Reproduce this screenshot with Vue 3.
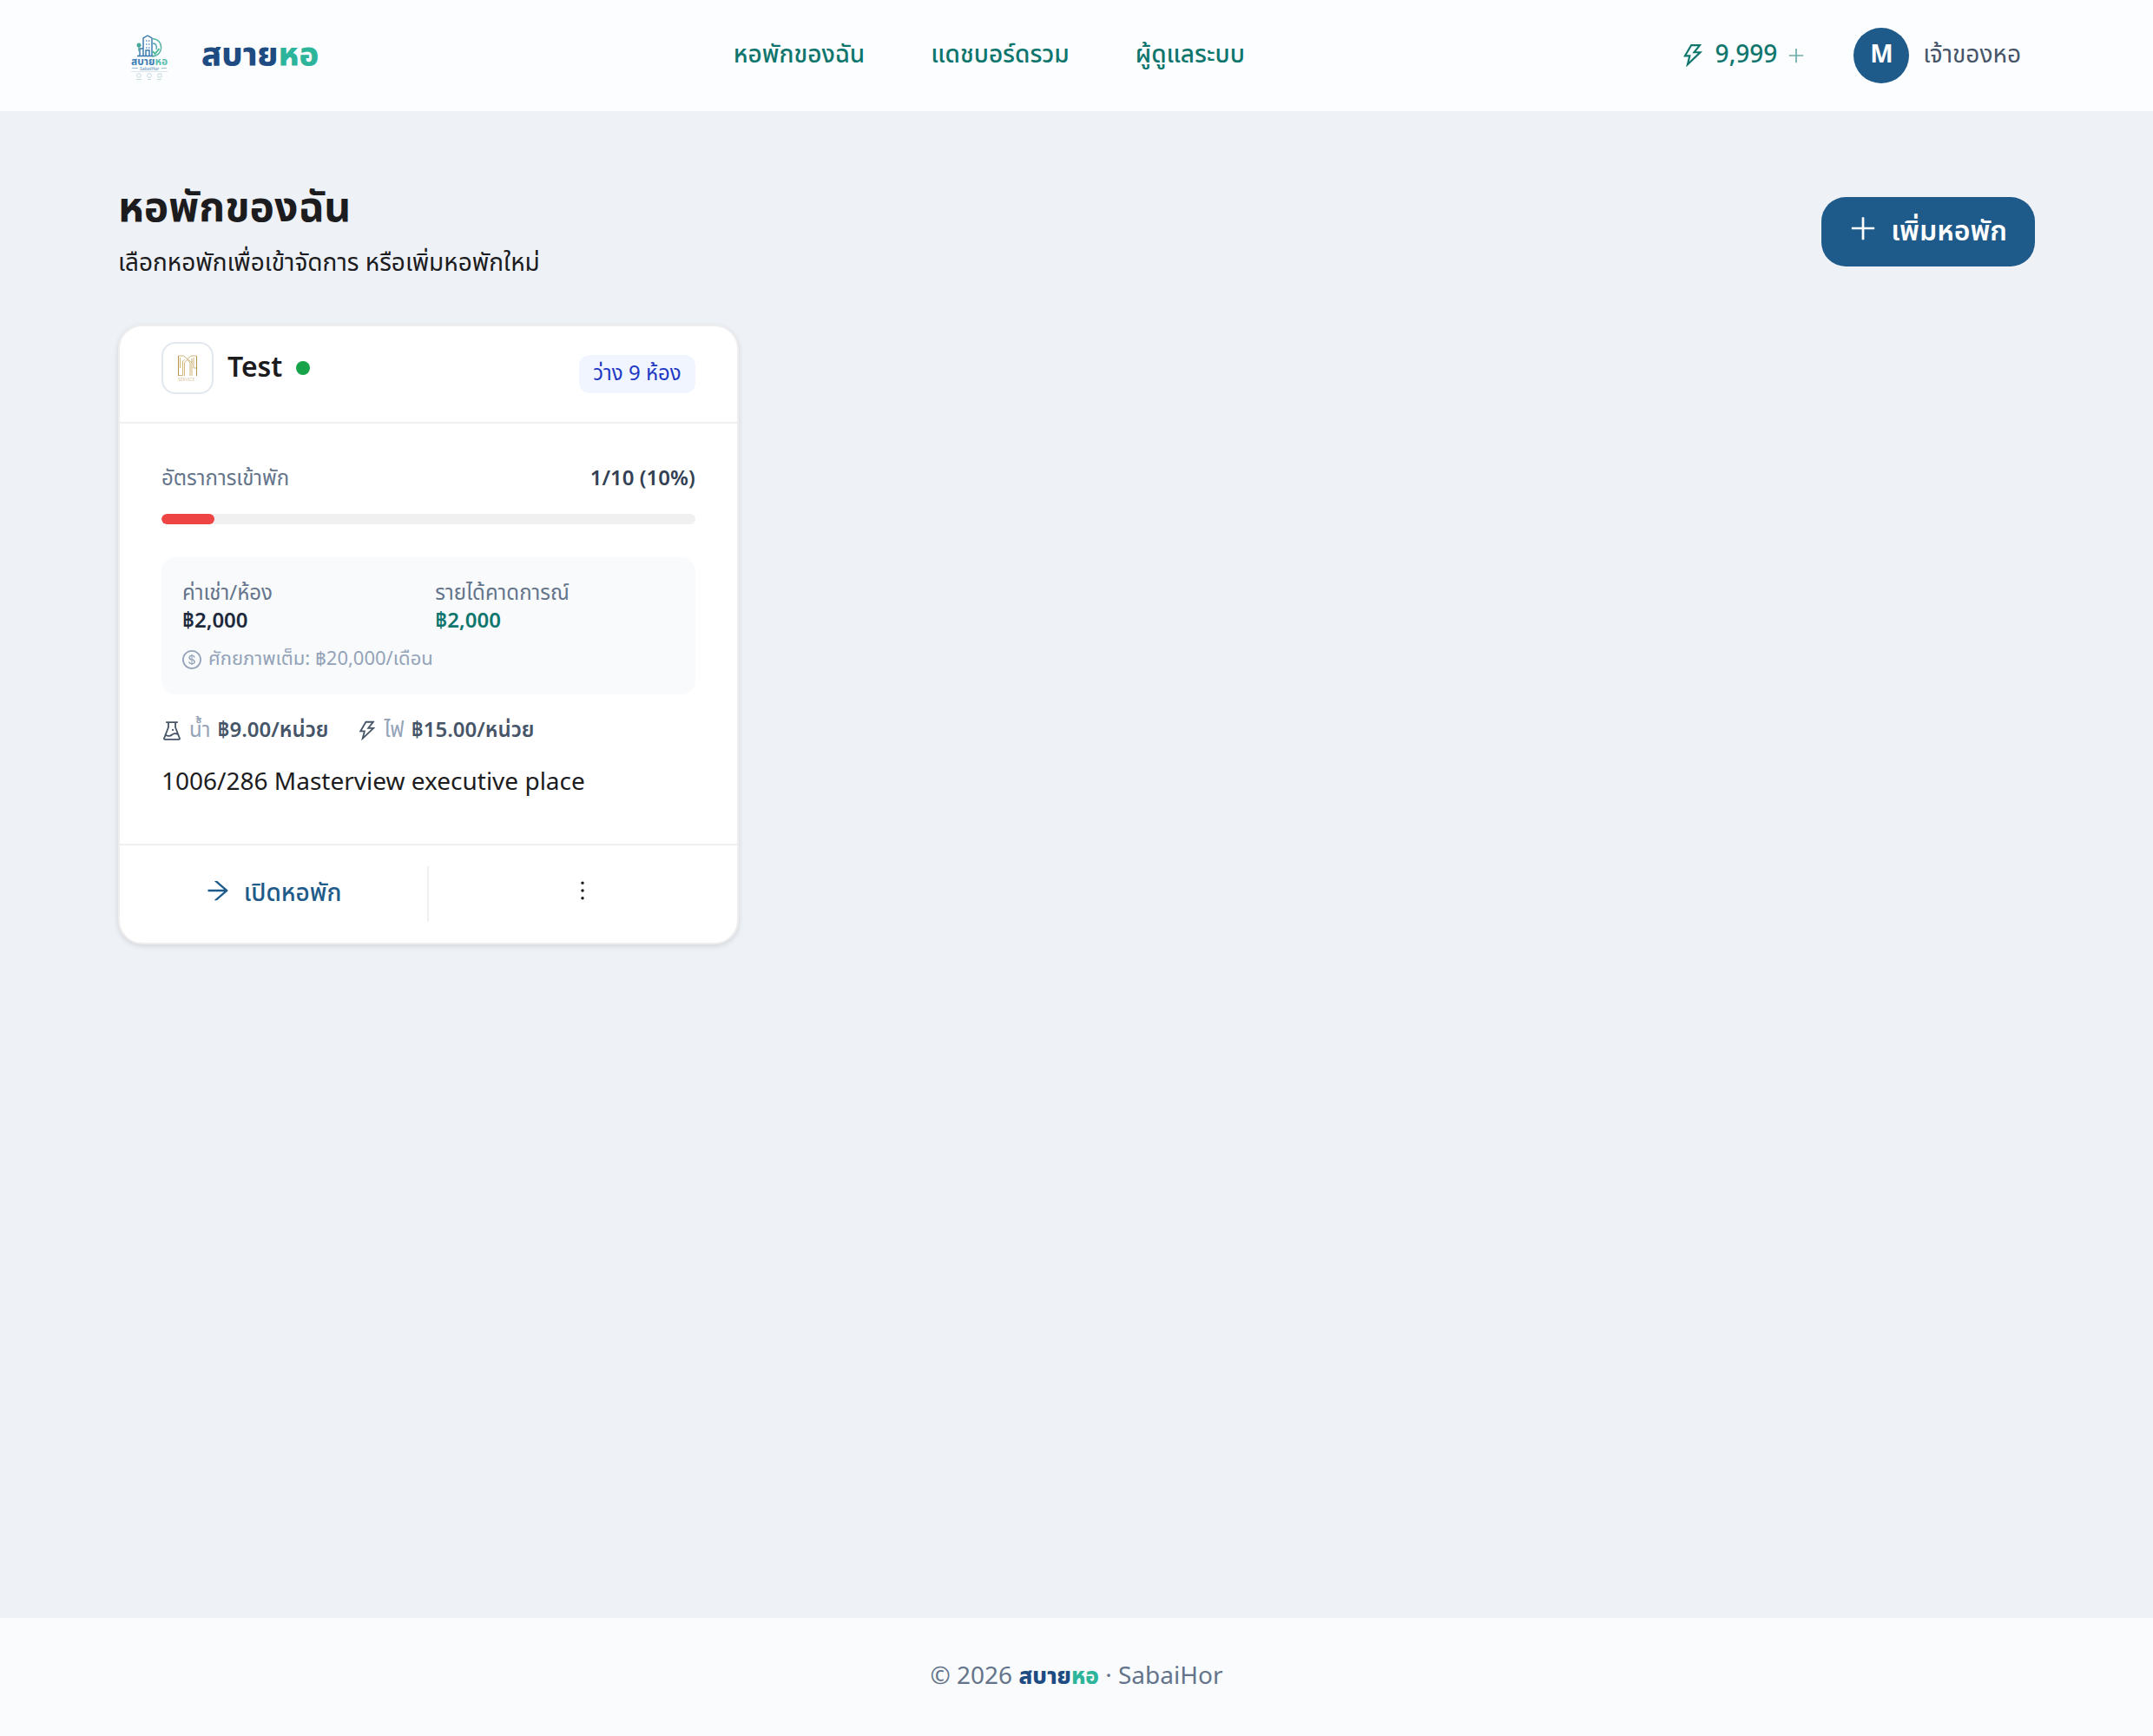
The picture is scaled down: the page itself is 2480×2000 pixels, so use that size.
<script setup>
const icons = {
  bolt: 'M848 359.3H627.7L825.8 109c4.1-5.3.4-13-6.3-13H436c-2.8 0-5.5 1.5-6.9 4L170 547.5c-3.1 5.3.7 12 6.9 12h174.4l-89.4 357.6c-1.9 7.8 7.5 13.3 13.3 7.7L853.5 373c5.2-4.9 1.7-13.7-5.5-13.7zM378.2 732.5l60.3-241H281.1l189.6-327.4h224.6L487 427.4h211L378.2 732.5z',
  flask: 'M512 472a40 40 0 1080 0 40 40 0 10-80 0zm367 352.9L696.3 352V178H768v-68H256v68h71.7v174L145 824.9c-2.8 7.4-4.3 15.2-4.3 23.1 0 35.3 28.7 64 64 64h614.6c7.9 0 15.7-1.5 23.1-4.3 33-12.7 49.4-49.8 36.6-82.8zM395.7 364.7V180h232.6v184.7L719.2 600c-20.7-5.3-42.1-8-63.9-8-61.2 0-119.2 21.5-165.3 60a188.78 188.78 0 01-121.3 43.9c-32.7 0-64.1-8.3-91.8-23.7l118.8-307.5zM210.5 844l41.7-107.8c35.7 18.1 75.4 27.8 116.6 27.8 61.2 0 119.2-21.5 165.3-60 33.9-28.2 76.3-43.9 121.3-43.9 35 0 68.4 9.5 97.6 27.1L813.5 844h-603z',
  arrow: 'M869 487.8L491.2 159.9c-2.9-2.5-6.6-3.9-10.5-3.9h-88.5c-7.4 0-10.8 9.2-5.2 14l350.2 304H152c-4.4 0-8 3.6-8 8v60c0 4.4 3.6 8 8 8h585.1L386.9 854c-5.6 4.9-2.2 14 5.2 14h91.5c1.9 0 3.8-.7 5.2-2L869 536.2a32.07 32.07 0 000-48.4z',
  more: 'M456 231a56 56 0 10112 0 56 56 0 10-112 0zm0 280a56 56 0 10112 0 56 56 0 10-112 0zm0 280a56 56 0 10112 0 56 56 0 10-112 0z',
  plus: 'M482 152h60q8 0 8 8v314h322q8 0 8 8v60q0 8-8 8H550v322q0 8-8 8h-60q-8 0-8-8V550H152q-8 0-8-8v-60q0-8 8-8h322V160q0-8 8-8z',
  dollar: 'M512 64C264.6 64 64 264.6 64 512s200.6 448 448 448 448-200.6 448-448S759.4 64 512 64zm0 820c-205.4 0-372-166.6-372-372s166.6-372 372-372 372 166.6 372 372-166.6 372-372 372zm47.7-395.2l-25.4-5.9V348.6c38 5.2 61.5 29 65.5 58.2.5 4 3.9 6.9 7.9 6.9h44.9c4.7 0 8.4-4.1 8-8.8-6.1-62.3-57.4-102.3-125.9-109.2V263c0-4.4-3.6-8-8-8h-28.1c-4.4 0-8 3.6-8 8v33c-70.8 6.9-126.2 46-126.2 119 0 67.6 49.8 100.2 102.1 112.7l24.7 6.3v142.7c-44.2-5.9-69-29.5-74.1-61.3-.6-3.8-4-6.6-7.9-6.6H363c-4.7 0-8.4 4-8 8.7 4.5 55 46.2 105.6 135.2 112.1V761c0 4.4 3.6 8 8 8h28.4c4.4 0 8-3.6 8-8.1l-.2-31.7c78.3-6.9 134.3-48.8 134.3-124-.1-69.4-44.2-100.4-109-116.4zm-68.6-16.2c-5.6-1.6-10.3-3.1-15-5-33.8-12.2-49.5-31.9-49.5-57.3 0-36.3 27.5-57 64.5-61.7v124zM534.3 677V543.3c3.1.9 5.9 1.6 8.8 2.2 47.3 14.4 63.2 34.4 63.2 65.1 0 39.1-29.4 62.6-72 66.4z',
}

const links = ['หอพักของฉัน', 'แดชบอร์ดรวม', 'ผู้ดูแลระบบ']
const occupied = 1
const rooms = 10
const percent = (occupied / rooms) * 100
</script>

<template>
  <div class="page">
    <header class="topbar">
      <a class="brand" href="#">
        <svg class="brand-logo" viewBox="0 0 80 80" aria-hidden="true">
          <g fill="none" stroke-width="1.4">
            <path d="M29 40V20l5-3 5 3v20M25 40v-8h4M32 40v-6h4v6M22 40.5h19" stroke="#3476ad" />
            <path d="M40 20.5c13 1 13 20-1 20.5" stroke="#55b3a4" />
            <path d="M40 26c4 0 5 3 4 7" stroke="#4b9fb0" />
            <path d="M40 35l2.5 3 5-6" stroke="#45b98f" stroke-width="1.8" />
            <path d="M32 23h1.5m1.5 0h1.5m-4.5 4h1.5m1.5 0h1.5m-4.5 4h1.5m1.5 0h1.5" stroke="#5b93c8" />
            <path d="M24 30v5" stroke="#45a99a" />
          </g>
          <circle cx="24" cy="28" r="2.5" fill="#45a99a" />
          <text x="15" y="51" class="logo-name" fill="#3c7db4">สบาย<tspan fill="#5cc0b0">หอ</tspan></text>
          <path d="M16 54.5h7M50 54.5h6" stroke="#8badc8" stroke-width=".8" />
          <text x="25" y="57" class="logo-sub" fill="#7ba3c4">SabaiHor</text>
          <path d="M15 58.5h42" stroke="#d5dfe6" stroke-width=".8" />
          <g fill="none" stroke="#c3d5dd" stroke-width=".9">
            <circle cx="24" cy="63" r="2.4" /><circle cx="36" cy="63" r="2.4" />
            <path d="M46 61h4v4h-4zM21 67.5h6M34 67.5h4M45 67.5h5" />
          </g>
        </svg>
        <span class="brand-name">สบาย<span class="mint">หอ</span></span>
      </a>
      <nav class="nav">
        <a v-for="link in links" :key="link" href="#">{{ link }}</a>
      </nav>
      <div class="account">
        <button class="credits" type="button">
          <svg class="i28" viewBox="64 64 896 896"><path :d="icons.bolt" /></svg>
          <span>9,999</span>
          <svg class="i20 faded" viewBox="64 64 896 896"><path :d="icons.plus" /></svg>
        </button>
        <button class="user" type="button">
          <span class="avatar">M</span>
          <span>เจ้าของหอ</span>
        </button>
      </div>
    </header>

    <main class="content">
      <div class="heading">
        <div>
          <h1>หอพักของฉัน</h1>
          <p>เลือกหอพักเพื่อเข้าจัดการ หรือเพิ่มหอพักใหม่</p>
        </div>
        <button class="add" type="button">
          <svg class="i32" viewBox="64 64 896 896"><path :d="icons.plus" /></svg>
          <span>เพิ่มหอพัก</span>
        </button>
      </div>

      <div class="grid">
        <article class="card">
          <div class="card-head">
            <div class="card-title">
              <svg class="dorm-logo" viewBox="0 0 56 56" aria-hidden="true">
                <g fill="none" stroke="#cfb57a" stroke-width="1">
                  <path d="M17.5 14h6l10 8M19.5 16v12M17.5 36.5h5V20l2-1.5M24.5 37V22l3.5-4M31 37V22l-3-3.5M28 17.5l4-3.5h6M35 16v12h3M33 37V17" />
                  <path d="M38.5 14v23M17.5 14v23" stroke="#b9954a" />
                </g>
                <text x="17" y="43" class="dorm-sub">SERVICE</text>
              </svg>
              <h2>Test</h2>
              <span class="dot"></span>
            </div>
            <span class="tag">ว่าง 9 ห้อง</span>
          </div>

          <div class="card-body">
            <div class="rate">
              <span>อัตราการเข้าพัก</span>
              <strong>{{ occupied }}/{{ rooms }} ({{ percent }}%)</strong>
            </div>
            <div class="bar"><div class="fill" :style="{ width: percent + '%' }"></div></div>
            <div class="panel">
              <div class="figures">
                <div><span>ค่าเช่า/ห้อง</span><strong>฿2,000</strong></div>
                <div><span>รายได้คาดการณ์</span><strong class="green">฿2,000</strong></div>
              </div>
              <div class="potential">
                <svg class="i22" viewBox="64 64 896 896"><path :d="icons.dollar" /></svg>
                <span>ศักยภาพเต็ม: ฿20,000/เดือน</span>
              </div>
            </div>
            <div class="utilities">
              <div>
                <svg class="i24" viewBox="64 64 896 896"><path :d="icons.flask" /></svg>
                <span>น้ำ</span><strong>฿9.00/หน่วย</strong>
              </div>
              <div>
                <svg class="i24" viewBox="64 64 896 896"><path :d="icons.bolt" /></svg>
                <span>ไฟ</span><strong>฿15.00/หน่วย</strong>
              </div>
            </div>
            <p class="address">1006/286 Masterview executive place</p>
          </div>

          <div class="card-foot">
            <button class="open" type="button">
              <svg class="i28" viewBox="64 64 896 896"><path :d="icons.arrow" /></svg>
              <span>เปิดหอพัก</span>
            </button>
            <button class="more" type="button" aria-label="เพิ่มเติม">
              <svg class="i28" viewBox="64 64 896 896"><path :d="icons.more" /></svg>
            </button>
          </div>
        </article>
      </div>
    </main>

    <footer class="footer">
      <p>© 2026 <b>สบาย<span class="mint">หอ</span></b> · SabaiHor</p>
    </footer>
  </div>
</template>

<style>
body { margin: 0; }
</style>

<style scoped>
.page {
  min-height: 100vh;
  display: flex;
  flex-direction: column;
  background: #eef1f6;
  color: #1c1c1e;
  font-family: "Noto Sans Thai", "Noto Sans", sans-serif;
  font-size: 28px;
  line-height: 44px;
}
.page * { box-sizing: border-box; }
h1, h2, p { margin: 0; }
a { text-decoration: none; }
button { border: 0; padding: 0; background: none; font: inherit; color: inherit; }
svg { fill: currentColor; flex: none; }
strong { font-weight: 600; }
.i20 { width: 20px; height: 20px; }
.i22 { width: 22px; height: 22px; }
.i24 { width: 24px; height: 24px; }
.i28 { width: 28px; height: 28px; }
.i32 { width: 32px; height: 32px; }
.faded { opacity: .6; }
.mint { color: #2db59b; }

.topbar {
  height: 128px;
  padding: 0 136px;
  display: flex;
  align-items: center;
  justify-content: space-between;
  background: #fcfdfe;
}
.brand { display: flex; align-items: center; gap: 16px; color: #1e4b82; }
.brand-logo { width: 80px; height: 80px; }
.logo-name { font-size: 12px; font-weight: 700; }
.logo-sub { font-size: 5px; font-weight: 600; }
.brand-name { font-size: 38px; font-weight: 800; }
.nav { display: flex; gap: 76px; margin-right: 24px; font-weight: 500; }
.nav a { color: #0f766e; }
.account { display: flex; align-items: center; gap: 56px; padding-right: 16px; }
.credits { display: flex; align-items: center; gap: 12px; color: #0f766e; font-weight: 500; }
.user { display: flex; align-items: center; gap: 16px; color: #475569; }
.avatar {
  width: 64px;
  height: 64px;
  border-radius: 50%;
  display: grid;
  place-items: center;
  background: #1e5b8a;
  color: #fff;
  font-weight: 700;
}

.content { flex: 1; padding: 80px 136px; }
.heading { display: flex; align-items: center; justify-content: space-between; margin-bottom: 48px; }
h1 { font-size: 48px; line-height: 66px; font-weight: 700; margin-bottom: 8px; }
.add {
  height: 80px;
  padding: 0 32px;
  display: flex;
  align-items: center;
  gap: 16px;
  border-radius: 28px;
  background: #1e5b8a;
  color: #fff;
  font-size: 32px;
  font-weight: 600;
}
.add svg, .card-foot svg { margin-bottom: 8px; }

.grid { display: grid; grid-template-columns: repeat(3, 1fr); gap: 32px; }
.card {
  border: 2px solid #eeeeef;
  border-radius: 28px;
  background: #fff;
  box-shadow: 0 2px 6px rgba(0, 0, 0, .12);
}
.card-head {
  height: 112px;
  padding: 0 48px;
  display: flex;
  align-items: center;
  justify-content: space-between;
  border-bottom: 2px solid #f0f0f0;
}
.card-title { display: flex; align-items: center; gap: 16px; padding-bottom: 14px; }
.dorm-logo { width: 60px; height: 60px; border: 2px solid #e2e8f0; border-radius: 16px; }
.dorm-sub { font-size: 5px; fill: #d9c7a0; }
h2 { font-size: 32px; line-height: 48px; font-weight: 600; }
.dot { width: 16px; height: 16px; border-radius: 50%; background: #16a34a; }
.tag {
  padding: 2px 16px;
  border-radius: 12px;
  background: #f0f5ff;
  color: #1d39c4;
  font-size: 24px;
  line-height: 40px;
}

.card-body { padding: 48px; }
.rate { display: flex; justify-content: space-between; font-size: 24px; line-height: 32px; color: #64748b; }
.rate strong { color: #334155; }
.bar { height: 12px; margin: 24px 0 38px; border-radius: 6px; background: #f0f0f0; overflow: hidden; }
.fill { height: 100%; border-radius: 6px; background: #ef4444; }
.panel { padding: 26px 24px 24px; border-radius: 16px; background: #f8fafc; }
.figures { display: grid; grid-template-columns: 1fr 1fr; gap: 16px; font-size: 24px; line-height: 32px; }
.figures div { display: flex; flex-direction: column; }
.figures span { color: #64748b; }
.figures strong { color: #1e293b; }
.figures .green { color: #0f766e; }
.potential { margin-top: 12px; display: flex; align-items: center; gap: 8px; font-size: 22px; line-height: 32px; color: #94a3b8; }
.utilities { margin-top: 26px; display: flex; gap: 32px; font-size: 24px; line-height: 32px; color: #475569; }
.utilities div { display: flex; align-items: center; gap: 8px; }
.utilities span { color: #94a3b8; }
.address { margin-top: 22px; }

.card-foot { display: flex; padding: 24px 0; border-top: 2px solid #f0f0f0; }
.card-foot button { flex: 1; height: 64px; display: flex; align-items: center; justify-content: center; gap: 16px; }
.card-foot .open { color: #1e5b8a; font-weight: 500; border-right: 2px solid #f0f0f0; }

.footer { padding: 46px 0; text-align: center; background: #f9fbfc; color: #64748b; }
.footer b { color: #1e4b82; font-size: 26px; font-weight: 800; }
.footer b .mint { color: #2db59b; }
</style>
